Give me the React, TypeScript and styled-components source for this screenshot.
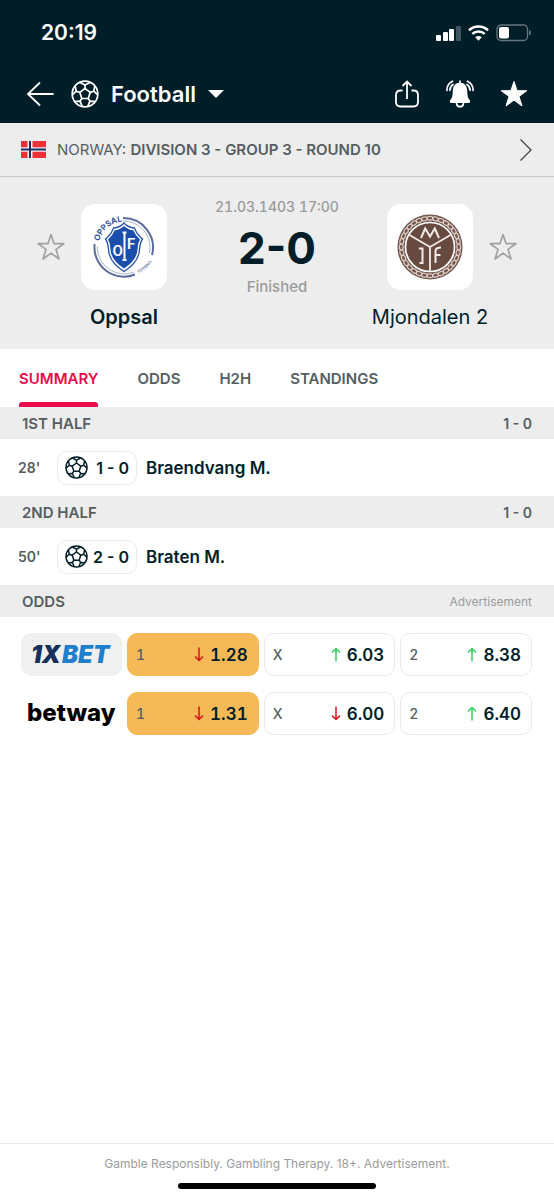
import React from "react";
import styled, { createGlobalStyle } from "styled-components";

const color = {
  ink: "#001e28",
  grey: "#ededed",
  line: "#c8c8c8",
  label: "#555e61",
  muted: "#999c9d",
  accent: "#eb0a4a",
  amber: "#f5b957",
  up: "#2fd35e",
  down: "#d7141c",
};

const GlobalStyle = createGlobalStyle`
  *, *::before, *::after { box-sizing: border-box; }
  body {
    margin: 0;
    background: #fff;
    color: ${color.ink};
    font-family: Inter, "Liberation Sans", sans-serif;
    font-size: 16px;
    -webkit-font-smoothing: antialiased;
  }
  button { font: inherit; color: inherit; background: none; border: 0; padding: 0; cursor: pointer; }
  a { color: inherit; text-decoration: none; }
  h1, h2, p { margin: 0; font: inherit; }
  svg { display: block; flex: none; }
`;

const Screen = styled.div`
  min-height: 100vh;
  display: flex;
  flex-direction: column;
`;

const TopBar = styled.header`
  background: ${color.ink};
  color: #fff;
`;

const StatusBar = styled.div`
  display: flex;
  align-items: center;
  justify-content: space-between;
  height: 66px;
  padding: 0 23px 0 41px;
`;

const Clock = styled.time`
  font-size: 21px;
  font-weight: 600;
  line-height: 24px;
`;

const StatusIcons = styled.div`
  display: flex;
  align-items: center;
  gap: 7px;
`;

const NavBar = styled.div`
  display: flex;
  align-items: center;
  justify-content: space-between;
  height: 57px;
  padding: 0 26px 2px;
`;

const NavGroup = styled.div<{ $gap: number }>`
  display: flex;
  align-items: center;
  gap: ${(p) => p.$gap}px;
`;

const SportButton = styled.button`
  display: flex;
  align-items: center;
  gap: 12px;
  font-size: 22px;
  font-weight: 600;
  line-height: 28px;
`;

const League = styled.a`
  display: flex;
  align-items: center;
  height: 54px;
  padding: 0 21px;
  gap: 11px;
  background: ${color.grey};
  border-bottom: 1px solid ${color.line};
  color: ${color.label};
  font-size: 15px;
  line-height: 20px;
`;

const LeagueName = styled.span`
  flex: 1;
  strong { font-weight: 600; }
`;

const Match = styled.section`
  display: flex;
  justify-content: space-between;
  align-items: flex-start;
  height: 172px;
  padding: 0 37px;
  background: ${color.grey};
`;

const Side = styled.div<{ $reverse?: boolean }>`
  display: flex;
  flex-direction: ${(p) => (p.$reverse ? "row-reverse" : "row")};
  gap: 16px;
  padding-top: 27px;
`;

const StarButton = styled.button`
  height: 86px;
`;

const Team = styled.div`
  display: flex;
  flex-direction: column;
  align-items: center;
  width: 86px;
`;

const Crest = styled.div`
  display: grid;
  place-items: center;
  width: 86px;
  height: 86px;
  border-radius: 14px;
  background: #fff;
`;

const TeamName = styled.h2<{ $winner?: boolean }>`
  margin-top: 14px;
  font-size: 20px;
  line-height: 26px;
  font-weight: ${(p) => (p.$winner ? 600 : 400)};
  white-space: nowrap;
`;

const Result = styled.div`
  display: flex;
  flex-direction: column;
  align-items: center;
  padding-top: 20px;
  color: ${color.muted};
  font-size: 15px;
  font-weight: 500;
  line-height: 20px;
`;

const KickOff = styled.time`
  font-size: 14px;
  font-variant-numeric: tabular-nums;
`;

const Score = styled.h1`
  margin: 10px 0 8px;
  color: ${color.ink};
  font-size: 44px;
  font-weight: 700;
  line-height: 42px;
`;

const Tabs = styled.nav`
  display: flex;
  gap: 39px;
  height: 58px;
  padding: 0 19px;
`;

const Tab = styled.a<{ $active?: boolean }>`
  position: relative;
  display: flex;
  align-items: center;
  padding-top: 2px;
  color: ${(p) => (p.$active ? color.accent : color.label)};
  font-size: 15px;
  font-weight: 600;
  line-height: 20px;

  &::after {
    content: "";
    position: absolute;
    inset: auto 0 0;
    height: 5px;
    border-radius: 3px 3px 0 0;
    background: ${(p) => (p.$active ? color.accent : "transparent")};
  }
`;

const SectionBar = styled.div`
  display: flex;
  align-items: center;
  justify-content: space-between;
  height: 32px;
  padding: 1px 22px 0;
  background: ${color.grey};
  color: ${color.label};
  font-size: 15px;
  font-weight: 600;
  line-height: 20px;
`;

const SectionScore = styled.span`
  font-size: 14px;
`;

const AdLabel = styled.span`
  color: ${color.muted};
  font-size: 12px;
  font-weight: 400;
`;

const Incident = styled.div`
  display: flex;
  align-items: center;
  height: 57px;
  padding: 0 18px;
`;

const Minute = styled.span`
  width: 39px;
  color: ${color.label};
  font-size: 14px;
  font-weight: 600;
`;

const GoalBadge = styled.span`
  display: flex;
  align-items: center;
  justify-content: space-between;
  width: 80px;
  height: 34px;
  padding: 0 7px;
  border: 1px solid #ebebeb;
  border-radius: 10px;
  font-size: 16px;
  font-weight: 600;
`;

const Scorer = styled.a`
  margin-left: 9px;
  font-size: 17px;
  font-weight: 600;
`;

const OddsList = styled.div`
  display: flex;
  flex-direction: column;
  gap: 16px;
  padding: 16px 22px 16px 21px;
`;

const OddsRow = styled.div`
  display: grid;
  grid-template-columns: 101px 1fr 1fr 1fr;
  gap: 5px;
  height: 43px;
`;

const Bookmaker = styled.a<{ $tinted?: boolean }>`
  display: grid;
  place-items: center;
  border-radius: 10px;
  background: ${(p) => (p.$tinted ? "#f0f0f0" : "transparent")};
`;

const OddButton = styled.button<{ $won?: boolean }>`
  display: flex;
  align-items: center;
  gap: 6px;
  padding: 0 10px 0 8px;
  border: 1px solid ${(p) => (p.$won ? color.amber : "#ebebeb")};
  border-radius: 10px;
  background: ${(p) => (p.$won ? color.amber : "#fff")};
  font-size: 17px;
  font-weight: 600;
  font-variant-numeric: tabular-nums;
`;

const Outcome = styled.span`
  flex: 1;
  color: ${color.label};
  font-size: 14px;
  font-weight: 500;
  text-align: left;
`;

const Footer = styled.footer`
  margin-top: auto;
  display: flex;
  flex-direction: column;
  align-items: center;
  padding: 10px 0 11px;
  border-top: 1px solid #ebebeb;
  color: ${color.muted};
  font-size: 12px;
  line-height: 20px;
`;

const HomeIndicator = styled.div`
  width: 198px;
  height: 6px;
  margin-top: 9px;
  border-radius: 3px;
  background: #000;
`;

const Ball = ({ size, stroke }: { size: number; stroke: number }) => (
  <svg width={size} height={size} viewBox="0 0 28 28" fill="none" stroke="currentColor" strokeWidth={stroke} strokeLinejoin="round">
    <circle cx="14" cy="14" r="12.8" />
    <path d="M14 8.500l5.200 3.900-2 6.100h-6.400l-2-6.100z" />
    <path d="M14 8.500V5M19.200 12.400l3.600-1.200M17.200 18.500l1.800 2.700M10.800 18.500L9 21.200M8.800 12.400l-3.600-1.200" />
    <path d="M9 2.400L14 5l5-2.600M23.800 6l-1 5.200 3.900 3.600M24.200 21.500l-5.200-.3-2.200 5.200M3.800 21.500l5.200-.3 2.200 5.200M4.200 6l1 5.200-3.900 3.600" />
  </svg>
);

const STAR = "M14 1.500l3.100 9.200h9.700l-7.800 5.700 3 9.600-8-5.900L6 26l3-9.600-7.800-5.700h9.700z";

const Star = ({ filled }: { filled?: boolean }) => (
  <svg width="28" height="28" viewBox="0 0 28 28" fill={filled ? "#fff" : "none"} stroke={filled ? "#fff" : "#a0a3a4"} strokeWidth={filled ? 1 : 1.7} strokeLinejoin="round">
    <path d={STAR} />
  </svg>
);

const BackArrow = () => (
  <svg width="28" height="26" viewBox="0 0 28 26" fill="none" stroke="#fff" strokeWidth="1.8">
    <path d="M14 1.500L2 13l12 11.500M2 13h25.500" />
  </svg>
);

const ShareIcon = () => (
  <svg width="26" height="28" viewBox="0 0 26 28" fill="none" stroke="#fff" strokeWidth="1.800">
    <path d="M8.500 10.500H6.500Q2 10.500 2 15v7q0 4.500 4.500 4.500h13q4.500 0 4.500-4.500v-7q0-4.500-4.500-4.500h-2M13 19V2M8.500 6L13 1.500 17.500 6" />
  </svg>
);

const BellIcon = () => (
  <svg width="28" height="28" viewBox="0 0 28 28" fill="none" stroke="#fff" strokeWidth="1.700" strokeLinecap="round">
    <path d="M14 1v3" />
    <path d="M14 2.800c-4.800 0-7 3.500-7.200 8-.2 5-.5 7-2.600 9.500-.7.900-.3 2.700 1 2.700h17.600c1.300 0 1.700-1.800 1-2.700-2.100-2.500-2.400-4.500-2.600-9.500-.2-4.500-2.400-8-7.200-8z" fill="#fff" stroke="none" />
    <path d="M10.500 23.500c.4 2.200 1.800 3.200 3.500 3.200s3.100-1 3.500-3.200" />
    <path d="M6.500 1.200Q.8 3.800 .9 10.500M7 4.500Q4 6.300 3.900 10.300M21.500 1.200q5.700 2.600 5.600 9.300M21 4.500q3 1.800 3.100 5.800" />
  </svg>
);

const SignalIcon = () => (
  <svg width="25" height="16" viewBox="0 0 25 16" fill="#fff">
    <rect x="0" y="10" width="5" height="6" rx="1" />
    <rect x="7" y="7" width="5" height="9" rx="1" />
    <rect x="13" y="4" width="5" height="12" rx="1" />
    <rect x="20" y="1" width="5" height="15" rx="1" opacity=".25" />
  </svg>
);

const WifiIcon = () => (
  <svg width="21" height="16" viewBox="0 0 21 16" fill="none" stroke="#fff" strokeWidth="2.600">
    <path d="M1 5.300Q5.200 1.500 10.500 1.500T20 5.300M4.300 8.900q2.700-2.400 6.200-2.400t6.200 2.400" />
    <path d="M7.200 12.200q3.300-2.500 6.600 0l-3.300 3.600z" fill="#fff" stroke="none" />
  </svg>
);

const BatteryIcon = () => (
  <svg width="35" height="18" viewBox="0 0 35 18">
    <rect x="1" y="1" width="30.500" height="15.500" rx="4" fill="none" stroke="#65767c" strokeWidth="1.300" />
    <rect x="3" y="3" width="10" height="11.500" rx="2" fill="#fff" />
    <path d="M33 6v5.500q2-.8 2-2.750T33 6" fill="#65767c" />
  </svg>
);

const Flag = () => (
  <svg width="25" height="17" viewBox="0 0 25 17">
    <path fill="#ed3237" d="M0 0h25v17H0z" />
    <path fill="#f3eef2" d="M6.500 0h5v17h-5zM0 6.200h25v4.600H0z" />
    <path fill="#1f2f66" d="M8 0h2v17H8zM0 7.600h25v1.800H0z" />
  </svg>
);

const Chevron = () => (
  <svg width="14" height="24" viewBox="0 0 14 24" fill="none" stroke="#3f474a" strokeWidth="1.300">
    <path d="M1.500 1.500L12 12 1.500 22.500" />
  </svg>
);

const OppsalCrest = () => (
  <svg width="66" height="66" viewBox="0 0 66 66" fill="none">
    <defs>
      <path id="oppsalTop" d="M8.200 27.300A25.500 25.500 0 0 1 40 8.500" />
      <path id="oppsalBottom" d="M47.500 59A30 30 0 0 0 64 40" />
    </defs>
    <path d="M32 4A29.500 29.500 0 0 1 61 41M44 60.500A29.500 29.500 0 0 1 3.600 30" stroke="#5c6c9e" strokeWidth="2" />
    <path d="M32 7A26.500 26.500 0 0 1 58.500 39M43 58A27 27 0 0 1 6.300 32" stroke="#a9b4cf" strokeWidth="1" />
    <text fontSize="8" fontWeight="700" fill="#33539b">
      <textPath href="#oppsalTop">OPPSAL</textPath>
    </text>
    <text fontSize="4" fontWeight="600" fill="#5c6c9e">
      <textPath href="#oppsalBottom">FOTBALL</textPath>
    </text>
    <path d="M33 9q4 4.500 10.500 5 2 6 8 11-2.500 3.500-3 10.500-.500 12.500-15.500 22Q18 48 17.500 35.500 17 28.500 14.500 25q6-5 8-11 6.500-.500 10.500-5z" fill="#fff" stroke="#2a55a5" strokeWidth="1.300" />
    <path d="M33 12q4.500 4 9.300 4.300 2 5.200 6.700 9.200-2.200 3.500-2.500 10Q46 46 33 54.500 20 46 19.500 35.500 19.200 29 17 25.500q4.700-4 6.700-9.200Q28.500 16 33 12z" fill="#1b4fae" />
    <text x="21.500" y="41.500" fontSize="15" fontWeight="600" fill="#fff" fontFamily="Roboto, sans-serif">O</text>
    <text x="36" y="35" fontSize="15" fontWeight="600" fill="#fff" fontFamily="Roboto, sans-serif">F</text>
    <path d="M31.500 18.500h4M33.500 18.500v27.500M31.500 46h4" stroke="#fff" strokeWidth="2" />
  </svg>
);

const chainLinks = Array.from({ length: 32 }, (_, i) => (i * 360) / 32);

const MjondalenCrest = () => (
  <svg width="66" height="66" viewBox="0 0 66 66" fill="none">
    <circle cx="33" cy="33" r="32.500" fill="#71574f" />
    <g stroke="#e0cdc4" strokeWidth="1.200">
      {chainLinks.map((angle) => (
        <ellipse key={angle} cx="33" cy="4.300" rx="3" ry="1.900" transform={`rotate(${angle} 33 33)`} />
      ))}
    </g>
    <circle cx="33" cy="33" r="24.500" fill="#674a40" stroke="#fff" strokeWidth="1.600" />
    <path d="M12.500 21L33 33l20.500-12M33 33v24" stroke="#f5ebe6" strokeWidth="1.800" />
    <path d="M24 24l4.200-9.500L33 22.500l4.800-8L42 24M22 34.500h3.500v14.500h-3M44 33.500q-5.500 0-5.500 3.500v12M38.500 41h5" stroke="#f5ebe6" strokeWidth="2" />
  </svg>
);

const OneXBetLogo = () => (
  <svg width="96" height="36" viewBox="0 0 96 36" role="img" aria-label="1XBET" fontFamily="Inter, sans-serif" fontSize="24" fontWeight="900" fontStyle="italic">
    <text x="7" y="26" fill="#15305c">1X</text>
    <text x="38" y="26" fill="#1f7fcb">BET</text>
  </svg>
);

const BetwayLogo = () => (
  <svg width="96" height="36" viewBox="0 0 96 36" role="img" aria-label="betway" fontFamily="Inter, sans-serif" fontSize="24" fontWeight="800">
    <text x="3" y="25" fill="#000">betway</text>
  </svg>
);

const TrendArrow = ({ up }: { up: boolean }) => (
  <svg width="10" height="15" viewBox="0 0 10 15" fill="none" stroke={up ? color.up : color.down} strokeWidth="1.500">
    <path d={up ? "M5 14.500V1.500M1 5.500l4-4 4 4" : "M5 .500v13M1 9.500l4 4 4-4"} />
  </svg>
);

type Odd = { outcome: string; value: string; up: boolean; won?: boolean };

const bookmakers: { name: string; tinted?: boolean; logo: React.ReactNode; odds: Odd[] }[] = [
  {
    name: "1xbet",
    tinted: true,
    logo: <OneXBetLogo />,
    odds: [
      { outcome: "1", value: "1.28", up: false, won: true },
      { outcome: "X", value: "6.03", up: true },
      { outcome: "2", value: "8.38", up: true },
    ],
  },
  {
    name: "betway",
    logo: <BetwayLogo />,
    odds: [
      { outcome: "1", value: "1.31", up: false, won: true },
      { outcome: "X", value: "6.00", up: false },
      { outcome: "2", value: "6.40", up: true },
    ],
  },
];

const halves = [
  { title: "1ST HALF", score: "1 - 0", minute: "28'", result: "1 - 0", scorer: "Braendvang M." },
  { title: "2ND HALF", score: "1 - 0", minute: "50'", result: "2 - 0", scorer: "Braten M." },
];

const tabs = ["SUMMARY", "ODDS", "H2H", "STANDINGS"];

export default function App() {
  return (
    <Screen>
      <GlobalStyle />
      <TopBar>
        <StatusBar>
          <Clock>20:19</Clock>
          <StatusIcons>
            <SignalIcon />
            <WifiIcon />
            <BatteryIcon />
          </StatusIcons>
        </StatusBar>
        <NavBar>
          <NavGroup $gap={17}>
            <button type="button" aria-label="Back"><BackArrow /></button>
            <SportButton type="button">
              <Ball size={28} stroke={1.7} />
              Football
              <svg width="16" height="8" viewBox="0 0 16 8" fill="#fff"><path d="M0 0h16L8 8z" /></svg>
            </SportButton>
          </NavGroup>
          <NavGroup $gap={26}>
            <button type="button" aria-label="Share"><ShareIcon /></button>
            <button type="button" aria-label="Notifications"><BellIcon /></button>
            <button type="button" aria-label="Favourite match"><Star filled /></button>
          </NavGroup>
        </NavBar>
      </TopBar>

      <League href="#league">
        <Flag />
        <LeagueName>NORWAY: <strong>DIVISION 3 - GROUP 3 - ROUND 10</strong></LeagueName>
        <Chevron />
      </League>

      <Match>
        <Side>
          <StarButton type="button" aria-label="Follow Oppsal"><Star /></StarButton>
          <Team>
            <Crest><OppsalCrest /></Crest>
            <TeamName $winner>Oppsal</TeamName>
          </Team>
        </Side>
        <Result>
          <KickOff>21.03.1403 17:00</KickOff>
          <Score>2-0</Score>
          <p>Finished</p>
        </Result>
        <Side $reverse>
          <StarButton type="button" aria-label="Follow Mjondalen 2"><Star /></StarButton>
          <Team>
            <Crest><MjondalenCrest /></Crest>
            <TeamName>Mjondalen 2</TeamName>
          </Team>
        </Side>
      </Match>

      <Tabs>
        {tabs.map((name, i) => (
          <Tab key={name} href={`#${name.toLowerCase()}`} $active={i === 0}>{name}</Tab>
        ))}
      </Tabs>

      {halves.map((half) => (
        <section key={half.title}>
          <SectionBar>
            <h2>{half.title}</h2>
            <SectionScore>{half.score}</SectionScore>
          </SectionBar>
          <Incident>
            <Minute>{half.minute}</Minute>
            <GoalBadge>
              <Ball size={23} stroke={1.8} />
              {half.result}
            </GoalBadge>
            <Scorer href="#player">{half.scorer}</Scorer>
          </Incident>
        </section>
      ))}

      <section>
        <SectionBar>
          <h2>ODDS</h2>
          <AdLabel>Advertisement</AdLabel>
        </SectionBar>
        <OddsList>
          {bookmakers.map((b) => (
            <OddsRow key={b.name}>
              <Bookmaker href={`#${b.name}`} $tinted={b.tinted}>{b.logo}</Bookmaker>
              {b.odds.map((odd) => (
                <OddButton key={odd.outcome} type="button" $won={odd.won}>
                  <Outcome>{odd.outcome}</Outcome>
                  <TrendArrow up={odd.up} />
                  {odd.value}
                </OddButton>
              ))}
            </OddsRow>
          ))}
        </OddsList>
      </section>

      <Footer>
        <p>Gamble Responsibly. Gambling Therapy. 18+. Advertisement.</p>
        <HomeIndicator />
      </Footer>
    </Screen>
  );
}
